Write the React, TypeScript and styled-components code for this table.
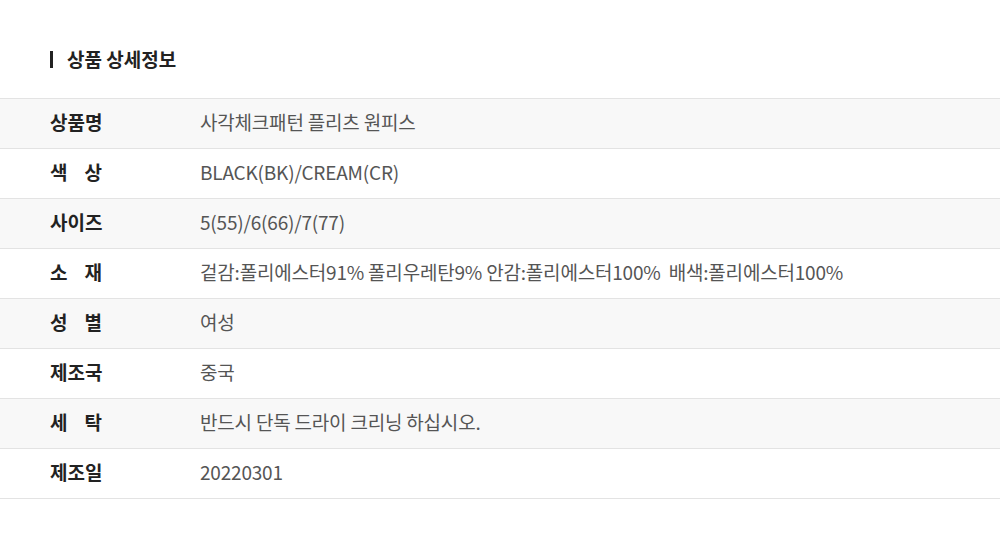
import React from "react";
import styled, { createGlobalStyle } from "styled-components";

type TypeSpec = {
  label: string;
  value: string;
};

const specs: TypeSpec[] = [
  { label: "상품명", value: "사각체크패턴 플리츠 원피스" },
  { label: "색 상", value: "BLACK(BK)/CREAM(CR)" },
  { label: "사이즈", value: "5(55)/6(66)/7(77)" },
  { label: "소 재", value: "겉감:폴리에스터91% 폴리우레탄9% 안감:폴리에스터100%  배색:폴리에스터100%" },
  { label: "성 별", value: "여성" },
  { label: "제조국", value: "중국" },
  { label: "세 탁", value: "반드시 단독 드라이 크리닝 하십시오." },
  { label: "제조일", value: "20220301" },
];

function App() {
  return (
    <>
      <GlobalStyle />
      <Container>
        <Title>상품 상세정보</Title>
        <Table>
          {specs.map((spec, i) => (
            <Row key={spec.label} $shaded={i % 2 === 0}>
              <Label>{spec.label}</Label>
              <Value>{spec.value}</Value>
            </Row>
          ))}
        </Table>
      </Container>
    </>
  );
}

const GlobalStyle = createGlobalStyle`
  body {
    margin: 0;
    background: #ffffff;
    font-family: "Noto Sans CJK KR", "Noto Sans", sans-serif;
  }
`;

const Container = styled.div`
  width: 1000px;
  padding-top: 46px;
`;

const Title = styled.h2`
  display: flex;
  align-items: center;
  margin: 0 0 26px 50px;
  height: 26px;
  font-size: 19px;
  font-weight: 700;
  line-height: 26px;
  color: #222222;

  &::before {
    content: "";
    width: 3px;
    height: 17px;
    margin-right: 14px;
    background: #222222;
  }
`;

const Table = styled.div`
  border-top: 1px solid #e3e3e3;
`;

const Row = styled.div<{ $shaded: boolean }>`
  box-sizing: border-box;
  display: flex;
  align-items: center;
  height: 50px;
  padding: 0 0 4px 50px;
  border-bottom: 1px solid #e3e3e3;
  background: ${(p) => (p.$shaded ? "#f8f8f8" : "#ffffff")};
`;

const Label = styled.div`
  flex: none;
  width: 52px;
  margin-right: 98px;
  font-size: 19px;
  font-weight: 700;
  color: #222222;
  white-space: nowrap;
  text-align: justify;
  text-align-last: justify;
`;

const Value = styled.div`
  font-size: 19px;
  font-weight: 400;
  color: #555555;
  letter-spacing: -0.2px;
  white-space: pre;
`;

export default App;
